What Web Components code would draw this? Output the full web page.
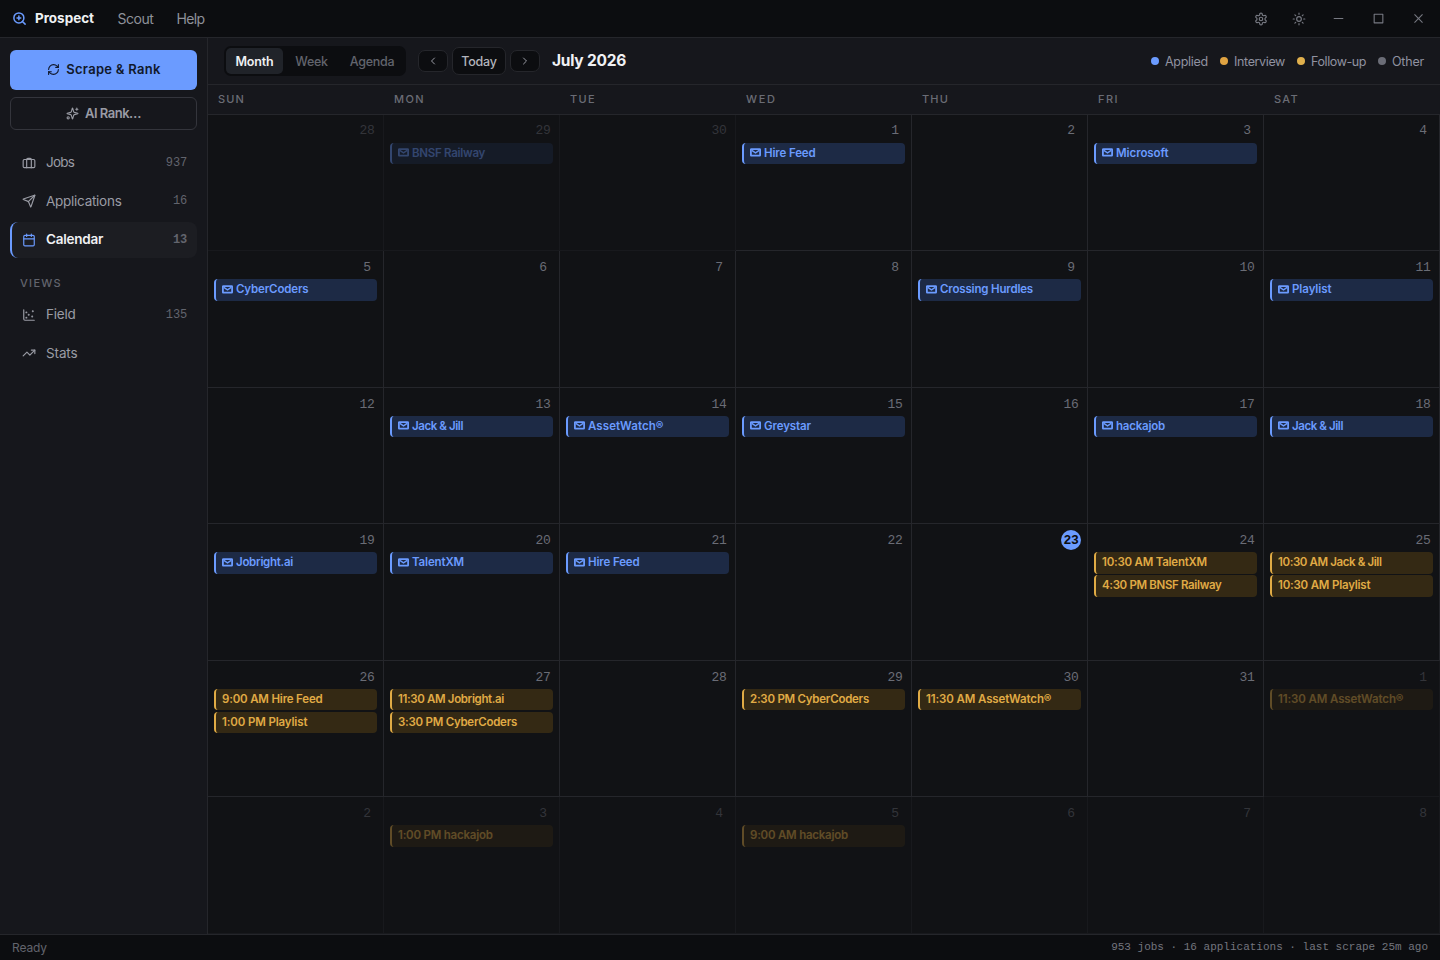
<!DOCTYPE html>
<html lang="en">
<head>
<meta charset="utf-8">
<title>Prospect</title>
<style>
html,body{margin:0;height:100%;background:#111215}
body{font-family:Inter,"Liberation Sans",sans-serif;font-size:14px;color:#9a9ca5;overflow:hidden;
--bg:#111215;--panel:#16171c;--deep:#0c0d10;--line:#25262b;--blue:#6b9bff;--gold:#e0ab45;--dim:#62646d;--text:#9a9ca5;--strong:#f0f1f4;--mono:"Liberation Mono",monospace}
</style>
</head>
<body>
<prospect-app></prospect-app>
<script>
const define = (name, html, setup) => customElements.define(name, class extends HTMLElement {
  connectedCallback() {
    if (this.shadowRoot) return;
    const root = this.attachShadow({ mode: "open" });
    root.innerHTML = typeof html === "function" ? html(this) : html;
    if (setup) setup(this, root);
  }
});

const ICONS = {
  logo: '<circle cx="11" cy="11" r="8"/><path d="m21 21-4.35-4.35M11 8v6M8 11h6"/>',
  refresh: '<path d="M3 12a9 9 0 0 1 9-9 9.75 9.75 0 0 1 6.74 2.74L21 8"/><path d="M21 3v5h-5M21 12a9 9 0 0 1-9 9 9.75 9.75 0 0 1-6.74-2.74L3 16"/><path d="M8 16H3v5"/>',
  sparkles: '<path d="M9.94 15.5A2 2 0 0 0 8.5 14.06l-6.14-1.58a.5.5 0 0 1 0-.96L8.5 9.94A2 2 0 0 0 9.94 8.5l1.58-6.14a.5.5 0 0 1 .96 0l1.58 6.14a2 2 0 0 0 1.44 1.44l6.14 1.58a.5.5 0 0 1 0 .96l-6.14 1.58a2 2 0 0 0-1.44 1.44l-1.58 6.14a.5.5 0 0 1-.96 0z"/><path d="M20 2v4M22 4h-4"/><circle cx="4" cy="20" r="2"/>',
  bag: '<path d="M16 20V6a2 2 0 0 0-2-2h-4a2 2 0 0 0-2 2v14"/><rect x="2" y="6" width="20" height="14" rx="2"/>',
  send: '<path d="M14.54 21.69a.5.5 0 0 0 .93-.03l6.5-19a.5.5 0 0 0-.63-.63l-19 6.5a.5.5 0 0 0-.03.93l7.93 3.18a2 2 0 0 1 1.11 1.11z"/><path d="m21.85 2.15-10.94 10.94"/>',
  calendar: '<path d="M8 2v4M16 2v4M3 10h18"/><rect x="3" y="4" width="18" height="18" rx="2"/>',
  scatter: '<circle cx="7.5" cy="7.5" r=".7" fill="currentColor"/><circle cx="18.5" cy="5.5" r=".7" fill="currentColor"/><circle cx="11.5" cy="11.5" r=".7" fill="currentColor"/><circle cx="7.5" cy="16.5" r=".7" fill="currentColor"/><circle cx="17.5" cy="14.5" r=".7" fill="currentColor"/><path d="M3 3v16a2 2 0 0 0 2 2h16"/>',
  trend: '<path d="M16 7h6v6"/><path d="m22 7-8.5 8.5-5-5L2 17"/>',
  gear: '<path d="M12.22 2h-.44a2 2 0 0 0-2 2v.18a2 2 0 0 1-1 1.73l-.43.25a2 2 0 0 1-2 0l-.15-.08a2 2 0 0 0-2.73.73l-.22.38a2 2 0 0 0 .73 2.73l.15.1a2 2 0 0 1 1 1.72v.51a2 2 0 0 1-1 1.74l-.15.09a2 2 0 0 0-.73 2.73l.22.38a2 2 0 0 0 2.73.73l.15-.08a2 2 0 0 1 2 0l.43.25a2 2 0 0 1 1 1.73V20a2 2 0 0 0 2 2h.44a2 2 0 0 0 2-2v-.18a2 2 0 0 1 1-1.73l.43-.25a2 2 0 0 1 2 0l.15.08a2 2 0 0 0 2.73-.73l.22-.39a2 2 0 0 0-.73-2.73l-.15-.08a2 2 0 0 1-1-1.74v-.5a2 2 0 0 1 1-1.74l.15-.09a2 2 0 0 0 .73-2.73l-.22-.38a2 2 0 0 0-2.73-.73l-.15.08a2 2 0 0 1-2 0l-.43-.25a2 2 0 0 1-1-1.73V4a2 2 0 0 0-2-2z"/><circle cx="12" cy="12" r="3"/>',
  sun: '<circle cx="12" cy="12" r="4"/><path d="M12 2v2M12 20v2M4.93 4.93l1.41 1.41M17.66 17.66l1.41 1.41M2 12h2M20 12h2M6.34 17.66l-1.41 1.41M19.07 4.93l-1.41 1.41"/>',
  minimize: '<path d="M4 12h16"/>',
  maximize: '<rect x="4" y="4" width="16" height="16"/>',
  close: '<path d="M5 5l14 14M19 5 5 19"/>',
  left: '<path d="m15 18-6-6 6-6"/>',
  right: '<path d="m9 18 6-6-6-6"/>'
};
define("ui-icon", el => {
  const s = el.getAttribute("size") || 14;
  return `<style>:host{display:block;flex:none;width:${s}px;height:${s}px}svg{display:block}</style>
  <svg width="${s}" height="${s}" viewBox="0 0 24 24" fill="none" stroke="currentColor" stroke-width="${el.getAttribute("weight") || 2}" stroke-linecap="round" stroke-linejoin="round">${ICONS[el.getAttribute("name")]}</svg>`;
});

define("mail-mark", `<style>:host{display:block;flex:none;width:11px;height:9px}svg{display:block}</style>
<svg width="11" height="9" viewBox="0 0 11 9" fill="none" stroke="currentColor"><rect x=".9" y="1.1" width="9.2" height="6.6" rx=".4" stroke-width="1.8"/><path d="M1.8 2.4 5.5 4.9 9.2 2.4" stroke-width="1.3"/></svg>`);

/* Text run tracked to a set advance width (w, in px). */
define("fit-label", `<style>:host{display:inline-block;white-space:pre}</style><slot></slot>`, el => {
  const want = +el.getAttribute("w"), n = [...el.textContent].length;
  if (!want || n < 2) return;
  const ls = (want - el.getBoundingClientRect().width) / n;
  el.style.letterSpacing = ls.toFixed(3) + "px";
});

define("title-bar", `<style>
:host{display:flex;align-items:center;height:38px;background:var(--deep);border-bottom:1px solid var(--line);padding:0 2px 1px 12px;box-sizing:border-box;font-size:14px;color:#8f919a}
.logo{color:var(--blue);margin-right:8px}.brand{color:var(--strong);font-weight:700;font-size:13.5px;margin-right:23.5px;padding-bottom:1px}
.menu{margin-right:23px}.grow{flex:1}
.tool,.win{display:flex;justify-content:center;color:#777982;padding-top:1px}.tool{width:38px}.win{width:40px}.tools{display:flex;align-items:center}
</style>
<ui-icon class="logo" name="logo" size="15" weight="2.4"></ui-icon>
<fit-label class="brand" w="59">Prospect</fit-label><fit-label class="menu" w="36">Scout</fit-label><fit-label class="menu" w="28">Help</fit-label>
<span class="grow"></span>
<div class="tools"><div class="tool"><ui-icon name="gear" size="14"></ui-icon></div><div class="tool"><ui-icon name="sun" size="14"></ui-icon></div>
<div class="win"><ui-icon name="minimize" size="13"></ui-icon></div><div class="win"><ui-icon name="maximize" size="13"></ui-icon></div><div class="win"><ui-icon name="close" size="13"></ui-icon></div></div>`);

define("nav-item", el => `<style>
:host{display:flex;align-items:center;height:36.5px;box-sizing:border-box;padding:0 10px 0 12px;border-radius:8px;font-size:13.5px;color:var(--text);margin-bottom:2px}
:host([active]){background:#1c1d22;color:var(--strong);font-weight:600;border-left:2px solid var(--blue);padding-left:10px}
:host([active]) ui-icon{color:var(--blue)}
.t{margin-left:10px;flex:1;padding-bottom:1px}.n{font:400 12px var(--mono);letter-spacing:-.15px;color:var(--dim)}:host([active]) .n{font-weight:700}
</style><ui-icon name="${el.getAttribute("icon")}"></ui-icon><span class="t"><fit-label w="${el.getAttribute("w")}">${el.getAttribute("label")}</fit-label></span><span class="n">${el.getAttribute("count") || ""}</span>`);

define("side-bar", `<style>
:host{display:block;box-sizing:border-box;width:208px;background:var(--panel);border-right:1px solid var(--line);padding:12px 10px}
.btn{display:flex;align-items:center;justify-content:center;gap:6px;box-sizing:border-box;border-radius:6px;font-size:13px;font-weight:600}
.primary{height:40px;background:#6b9bff;color:#10182b;margin-bottom:7px;padding-bottom:2px;padding-left:1px}
.second{height:33px;border:1px solid #34353c;margin-bottom:14.5px;padding-bottom:1px;color:#9a9ca5}
.head{font-size:11px;font-weight:500;color:#62646d;margin:17.5px 0 7px 10px;line-height:14px}
</style>
<div class="btn primary"><ui-icon name="refresh" size="13"></ui-icon><fit-label w="94.5">Scrape &amp; Rank</fit-label></div>
<div class="btn second"><ui-icon name="sparkles" size="13"></ui-icon><fit-label w="56">AI Rank…</fit-label></div>
<nav-item icon="bag" label="Jobs" w="28" count="937"></nav-item>
<nav-item icon="send" label="Applications" w="75.5" count="16"></nav-item>
<nav-item icon="calendar" label="Calendar" w="57" count="13" active></nav-item>
<div class="head"><fit-label w="42">VIEWS</fit-label></div>
<nav-item icon="scatter" label="Field" w="29.5" count="135"></nav-item>
<nav-item icon="trend" label="Stats" w="31.5"></nav-item>`);

define("cal-toolbar", `<style>
:host{display:flex;align-items:center;height:47px;box-sizing:border-box;background:var(--panel);border-bottom:1px solid var(--line);padding:0 16px;font-size:12.5px}
.seg{display:flex;background:var(--deep);border-radius:7px;padding:2px;height:26px;width:178px;margin-right:12px;font-weight:500;color:var(--dim)}
.seg div{display:flex;align-items:center;justify-content:center;border-radius:5px}.seg .on{background:#202329;color:var(--strong);font-weight:600}
.b{display:flex;align-items:center;justify-content:center;box-sizing:border-box;border:1px solid #25262b;background:var(--deep);border-radius:7px;margin-right:4px;width:30px;height:22px;color:#9a9ca5}
.today{width:54px;height:28px;font-weight:500;color:#b3b5bd}
h1{font-size:15.5px;font-weight:700;margin:0 0 0 8px;color:var(--strong);flex:1;line-height:20px}
.lg{display:flex;align-items:center;gap:6px;margin-left:12px;color:#9092a0}.lg i{width:8px;height:8px;border-radius:50%}
</style>
<div class="seg"><div class="on" style="width:57px"><fit-label w="38">Month</fit-label></div><div style="width:57px"><fit-label w="32.5">Week</fit-label></div><div style="width:64px"><fit-label w="44.5">Agenda</fit-label></div></div>
<div class="b"><ui-icon name="left" size="12"></ui-icon></div><div class="b today"><fit-label w="35.5">Today</fit-label></div><div class="b"><ui-icon name="right" size="12"></ui-icon></div>
<h1><fit-label w="74">July 2026</fit-label></h1>
<div class="lg"><i style="background:#6b9bff"></i><fit-label w="43">Applied</fit-label></div>
<div class="lg"><i style="background:#e0a342"></i><fit-label w="51">Interview</fit-label></div>
<div class="lg"><i style="background:#e0b04d"></i><fit-label w="55">Follow-up</fit-label></div>
<div class="lg"><i style="background:#6b6d77"></i><fit-label w="32">Other</fit-label></div>`);

define("cal-event", el => `<style>
:host{display:flex;align-items:center;gap:3px;box-sizing:border-box;height:21.3px;padding:0 6px 1.3px;border-radius:4px;border-left:2px solid var(--gold);background:#342914;color:var(--gold);font-size:11.5px;font-weight:600;margin-bottom:1.8px;line-height:14px;overflow:hidden}
:host([applied]){border-color:var(--blue);background:#1d2a45;color:var(--blue)}
</style>${el.hasAttribute("applied") ? "<mail-mark></mail-mark>" : ""}<fit-label><slot></slot></fit-label>`, (el, root) => {
  const l = root.querySelector("fit-label"), n = [...el.textContent].length;
  l.style.letterSpacing = ((+el.getAttribute("w") - l.getBoundingClientRect().width) / n).toFixed(3) + "px";
});

define("cal-day", el => `<style>
:host{display:block;box-sizing:border-box;min-width:0;padding:6px 6px 0;border-right:1px solid var(--line);border-bottom:1px solid var(--line)}
:host([out]){opacity:.38}
.d{display:flex;justify-content:flex-end;height:20px;margin-bottom:2px}
.d span{box-sizing:border-box;width:20px;height:20px;line-height:20px;padding-top:.7px;display:flex;justify-content:center;font-family:var(--mono);font-size:13px;letter-spacing:-.2px;color:#6a6c75}
:host([today]) .d span{background:var(--blue);border-radius:50%;color:#0c0d10;font-weight:700}
</style><div class="d"><span>${el.getAttribute("n")}</span></div><slot></slot>`);

const E = {
  "6-29": [["BNSF Railway", 73, 1]], "7-1": [["Hire Feed", 51.5, 1]], "7-3": [["Microsoft", 52.5, 1]],
  "7-5": [["CyberCoders", 72.5, 1]], "7-9": [["Crossing Hurdles", 93, 1]], "7-11": [["Playlist", 39.5, 1]],
  "7-13": [["Jack &amp; Jill", 51, 1]], "7-14": [["AssetWatch®", 75.5, 1]], "7-15": [["Greystar", 47, 1]],
  "7-17": [["hackajob", 49, 1]], "7-18": [["Jack &amp; Jill", 51, 1]], "7-19": [["Jobright.ai", 57, 1]],
  "7-20": [["TalentXM", 52, 1]], "7-21": [["Hire Feed", 51.5, 1]],
  "7-24": [["10:30 AM TalentXM", 105], ["4:30 PM BNSF Railway", 119.5]],
  "7-25": [["10:30 AM Jack &amp; Jill", 103.5], ["10:30 AM Playlist", 92.3]],
  "7-26": [["9:00 AM Hire Feed", 100.5], ["1:00 PM Playlist", 85.3]],
  "7-27": [["11:30 AM Jobright.ai", 106], ["3:30 PM CyberCoders", 119]],
  "7-29": [["2:30 PM CyberCoders", 119]], "7-30": [["11:30 AM AssetWatch®", 125.3]],
  "8-1": [["11:30 AM AssetWatch®", 125.3]], "8-3": [["1:00 PM hackajob", 94.7]], "8-5": [["9:00 AM hackajob", 98]]
};
define("month-grid", () => {
  const heads = [["SUN", 27], ["MON", 31], ["TUE", 26], ["WED", 30.5], ["THU", 27], ["FRI", 21], ["SAT", 25]];
  let days = "";
  for (let i = 0; i < 42; i++) {
    const t = new Date(2026, 5, 28 + i), m = t.getMonth() + 1, d = t.getDate();
    const ev = (E[m + "-" + d] || []).map(e => `<cal-event w="${e[1]}"${e[2] ? " applied" : ""}>${e[0]}</cal-event>`).join("");
    days += `<cal-day n="${d}"${m !== 7 ? " out" : ""}${m === 7 && d === 23 ? " today" : ""}>${ev}</cal-day>`;
  }
  return `<style>
:host{display:flex;flex-direction:column;min-height:0}
.h{display:grid;grid-template-columns:repeat(7,1fr);height:29.8px;box-sizing:border-box;background:var(--panel);border-bottom:1px solid var(--line);align-items:center;font-size:11px;font-weight:500;color:#6a6c75}
.h div{padding:0 0 1.5px 10px;line-height:14px}
.g{flex:1;display:grid;grid-template-columns:repeat(7,minmax(0,1fr));grid-template-rows:repeat(6,minmax(0,1fr));background:var(--bg)}
</style><div class="h">${heads.map(h => `<div><fit-label w="${h[1]}">${h[0]}</fit-label></div>`).join("")}</div><div class="g">${days}</div>`;
});

define("status-bar", `<style>
:host{display:flex;align-items:center;justify-content:space-between;height:26px;box-sizing:border-box;background:var(--deep);border-top:1px solid var(--line);padding:0 12px;font-size:12px;color:#62646d}
.m{font:11px var(--mono);color:#73757e;padding-bottom:1px}
</style><fit-label w="35">Ready</fit-label><span class="m">953 jobs · 16 applications · last scrape 25m ago</span>`);

define("prospect-app", `<style>
:host{display:flex;flex-direction:column;height:100vh;background:var(--bg)}
.body{flex:1;display:flex;min-height:0}main{flex:1;display:flex;flex-direction:column;min-width:0}month-grid{flex:1}side-bar{flex:none}
</style><title-bar></title-bar><div class="body"><side-bar></side-bar><main><cal-toolbar></cal-toolbar><month-grid></month-grid></main></div><status-bar></status-bar>`);
</script>
</body>
</html>
